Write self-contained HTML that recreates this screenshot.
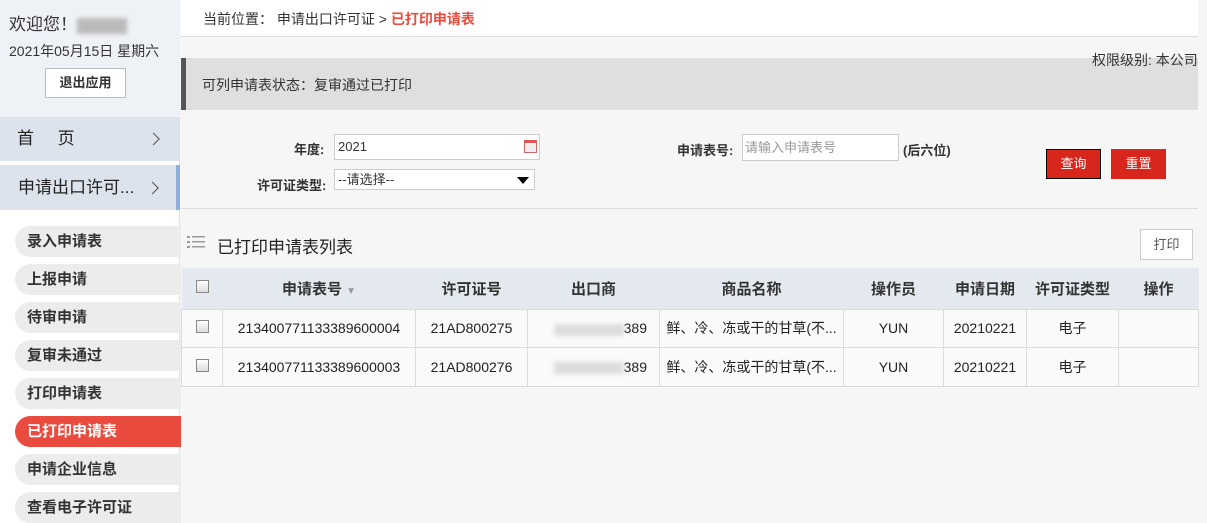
<!DOCTYPE html>
<html><head><meta charset="utf-8"><style>
*{margin:0;padding:0;box-sizing:border-box}
body{width:1207px;height:523px;overflow:hidden;font-family:"Liberation Sans","Noto Sans CJK SC",sans-serif;font-size:14px;color:#333;background:#f6f6f6;position:relative}
.abs{position:absolute}
#side{left:0;top:0;width:180px;height:523px;background:#fff;border-right:1px solid #dde3ec}
.nav{position:absolute;left:0;width:180px;background:#dde3ec;font-size:17px;color:#222}
.pill{position:absolute;left:15px;width:166px;height:31px;border-radius:16px 0 0 16px;background:#ececec;font-size:15px;font-weight:bold;color:#333;line-height:31px;padding-left:12px}
.pill.on{background:#e94c3f;color:#fff}
.btn{position:absolute;color:#fff;background:#d9261c;font-size:13px;text-align:center;line-height:30px;height:30px}
table{border-collapse:collapse;position:absolute;left:181px;top:268px;width:1018px;font-size:14px}
th{background:#e4e8ef;height:41px;font-weight:bold;color:#333;font-size:15px}
td{background:#fafafa;height:38.5px;border:1px solid #dcdcdc;text-align:center;color:#222}
.cb{display:inline-block;width:13px;height:13px;border:1px solid #888;background:linear-gradient(#fff,#ddd)}
.blur{display:inline-block;width:70px;height:12px;background:#ddd;filter:blur(2px);vertical-align:middle}
.chev{position:absolute;top:50%;width:9px;height:9px;border-right:1.5px solid #555;border-top:1.5px solid #555;transform:translateY(-50%) rotate(45deg)}
</style></head><body>
<div id="side" class="abs">
 <div class="abs" style="left:0;top:0;width:180px;height:117px;background:#eef1f6"></div>
 <div class="abs" style="left:9px;top:10px;font-size:17px;color:#333">欢迎您！<span class="blur" style="width:50px;height:16px;background:#bbb"></span></div>
 <div class="abs" style="left:9px;top:41px;font-size:14px">2021年05月15日 星期六</div>
 <div class="abs" style="left:45px;top:68px;width:81px;height:30px;border:1px solid #bbb;background:#fff;text-align:center;line-height:28px;font-size:13px;font-weight:bold">退出应用</div>
 <div class="nav" style="top:117px;height:44px;line-height:44px;padding-left:17px">首&nbsp;&nbsp;&nbsp;&nbsp;&nbsp;页<span class="chev" style="right:22px"></span></div>
 <div class="nav" style="top:165px;height:45px;line-height:45px;padding-left:18px;border-right:4px solid #8fb0d8">申请出口许可...<span class="chev" style="right:19px"></span></div>
 <div class="pill" style="top:226px">录入申请表</div>
 <div class="pill" style="top:264px">上报申请</div>
 <div class="pill" style="top:302px">待审申请</div>
 <div class="pill" style="top:340px">复审未通过</div>
 <div class="pill" style="top:378px">打印申请表</div>
 <div class="pill on" style="top:416px">已打印申请表</div>
 <div class="pill" style="top:454px">申请企业信息</div>
 <div class="pill" style="top:492px">查看电子许可证</div>
</div>
<div class="abs" style="left:181px;top:0;width:1017px;height:37px;background:#fff;border-bottom:1px solid #ddd"></div>
<div class="abs" style="left:1198px;top:0;width:9px;height:523px;background:#f6f6f6"></div>
<div class="abs" style="left:203px;top:9px;font-size:14px;color:#333">当前位置：&nbsp;申请出口许可证 &gt; <b style="color:#e94c3f">已打印申请表</b></div>
<div class="abs" style="left:181px;top:58px;width:1017px;height:52px;background:#dfdfdf;border-left:5px solid #555"></div>
<div class="abs" style="left:202px;top:75px;font-size:14px;color:#333">可列申请表状态：复审通过已打印</div>
<div class="abs" style="left:1092px;top:50px;font-size:14px;color:#333">权限级别: 本公司</div>
<div class="abs" style="left:294px;top:139px;font-size:13px;font-weight:bold">年度:</div>
<div class="abs" style="left:334px;top:134px;width:206px;height:26px;border:1px solid #ccc;background:#fff;font-size:13px;line-height:24px;padding-left:3px">2021<span style="position:absolute;right:2px;top:5px;width:13px;height:13px;border:1px solid #c66;background:#eee;border-top:3px solid #d55"></span></div>
<div class="abs" style="left:257px;top:175px;font-size:13px;font-weight:bold">许可证类型:</div>
<div class="abs" style="left:334px;top:169px;width:201px;height:21px;border:1px solid #ccc;background:#fff;font-size:13px;line-height:19px;padding-left:3px">--请选择--<span style="position:absolute;right:5px;top:7px;border:6px solid transparent;border-top:7px solid #000"></span></div>
<div class="abs" style="left:677px;top:140px;font-size:13px;font-weight:bold">申请表号:</div>
<div class="abs" style="left:742px;top:134px;width:157px;height:27px;border:1px solid #ccc;background:#fff;font-size:13px;line-height:25px;padding-left:2px;color:#999">请输入申请表号</div>
<div class="abs" style="left:903px;top:140px;font-size:13px;font-weight:bold">(后六位)</div>
<div class="btn" style="left:1046px;top:149px;width:55px;border:1px solid #000;line-height:28px">查询</div>
<div class="btn" style="left:1111px;top:149px;width:55px">重置</div>
<div class="abs" style="left:181px;top:208px;width:1017px;height:1px;background:#ddd"></div>
<div class="abs" style="left:187px;top:236px;width:3px;height:14px;background:repeating-linear-gradient(#999 0 2px,transparent 2px 5px)"></div>
<div class="abs" style="left:192px;top:236px;width:13px;height:14px;background:repeating-linear-gradient(#999 0 1.5px,transparent 1.5px 5px)"></div>
<div class="abs" style="left:217px;top:233px;font-size:17px;color:#222">已打印申请表列表</div>
<div class="abs" style="left:1140px;top:229px;width:53px;height:31px;border:1px solid #ccc;background:#fff;text-align:center;line-height:29px;font-size:13px;color:#555">打印</div>
<table>
<tr><th style="width:41px"><span class="cb"></span></th><th style="width:193px">申请表号 <span style="color:#999;font-size:10px">▼</span></th><th style="width:112px">许可证号</th><th style="width:132px">出口商</th><th style="width:184px">商品名称</th><th style="width:100px">操作员</th><th style="width:83px">申请日期</th><th style="width:92px">许可证类型</th><th>操作</th></tr>
<tr><td><span class="cb"></span></td><td>213400771133389600004</td><td>21AD800275</td><td style="text-align:right;padding-right:12px"><span class="blur"></span>389</td><td>鲜、冷、冻或干的甘草(不...</td><td>YUN</td><td>20210221</td><td>电子</td><td></td></tr>
<tr><td><span class="cb"></span></td><td>213400771133389600003</td><td>21AD800276</td><td style="text-align:right;padding-right:12px"><span class="blur"></span>389</td><td>鲜、冷、冻或干的甘草(不...</td><td>YUN</td><td>20210221</td><td>电子</td><td></td></tr>
</table>
</body></html>
